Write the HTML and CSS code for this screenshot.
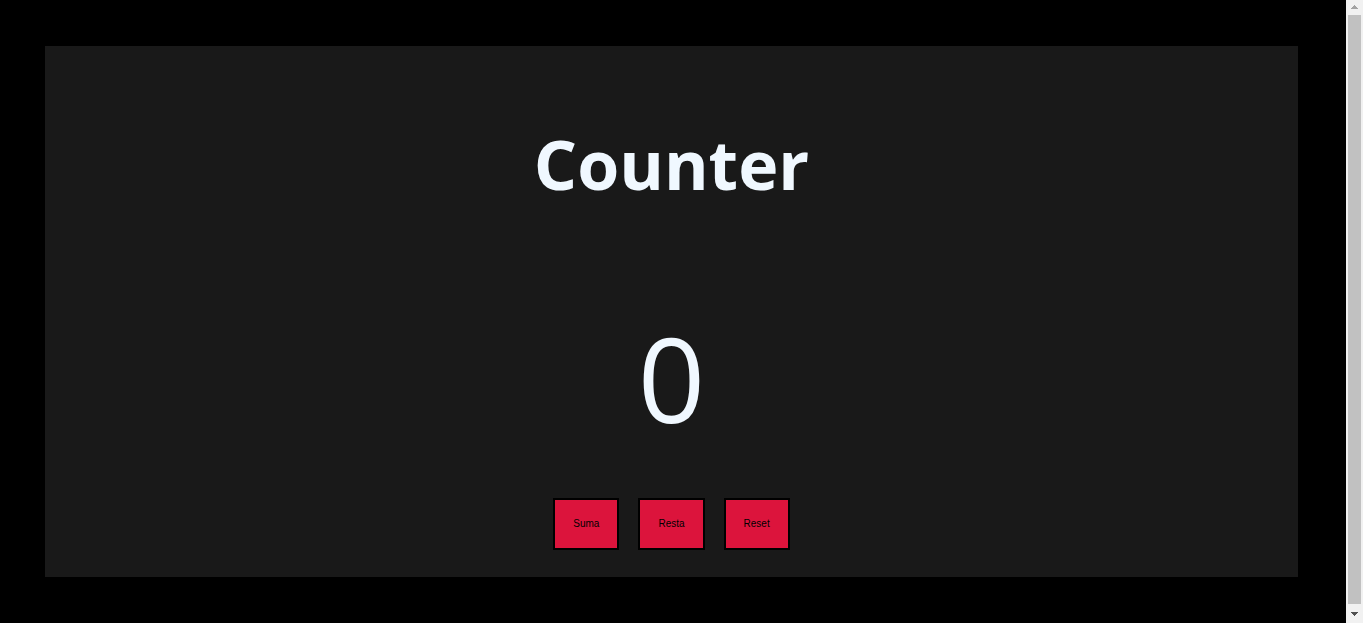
FILE: index.html
```html
<!DOCTYPE html>
<html lang="es">
<head>
<meta charset="utf-8">
<title>Counter</title>
<link rel="stylesheet" href="styles.css">
</head>
<body>
<div class="page">
  <main class="card">
    <h1 class="title">Counter</h1>
    <output class="value">0</output>
    <div class="actions">
      <button class="btn" type="button">Suma</button>
      <button class="btn" type="button">Resta</button>
      <button class="btn" type="button">Reset</button>
    </div>
  </main>
</div>
<div class="scrollbar" aria-hidden="true">
  <svg class="arrow" width="17" height="15" viewBox="0 0 17 15" shape-rendering="crispEdges"><path fill="#a3a3a3" d="M8 5h1v1h1v1h1v1h1v1H5V8h1V7h1V6h1z"/></svg>
  <div class="thumb"></div>
  <svg class="arrow" width="17" height="19" viewBox="0 0 17 19" shape-rendering="crispEdges"><path fill="#505050" d="M5 8h7v1h-1v1h-1v1H9v1H8v-1H7v-1H6V9H5z"/></svg>
</div>
</body>
</html>
```
FILE: styles.css
```css
* {
  box-sizing: border-box;
}

body {
  margin: 0;
  min-height: 100vh;
  display: flex;
  background: #000;
  color: aliceblue;
  font-family: "Open Sans", "Noto Sans", sans-serif;
}

.page {
  flex: 1;
  display: flex;
  padding: 46px 48px 46px 45px;
}

.card {
  flex: 1;
  display: flex;
  flex-direction: column;
  align-items: center;
  padding: 70px 24px 27px;
  background: #191919;
}

.title {
  margin: 0;
  font-size: 68px;
  line-height: 96px;
  font-weight: 700;
}

.value {
  margin-top: 86px;
  font-size: 118px;
  line-height: 160px;
}

.actions {
  display: flex;
  gap: 19px;
  margin-top: auto;
}

.btn {
  padding: 18px;
  border: 2px solid #000;
  background: crimson;
  color: #000;
  font: 10px/12px "Liberation Sans", Arial, sans-serif;
}

.scrollbar {
  width: 17px;
  display: flex;
  flex-direction: column;
  background: #f1f1f1;
}

.arrow {
  display: block;
}

.thumb {
  flex: 1;
  margin: 0 2px;
  background: #c1c1c1;
}
```
